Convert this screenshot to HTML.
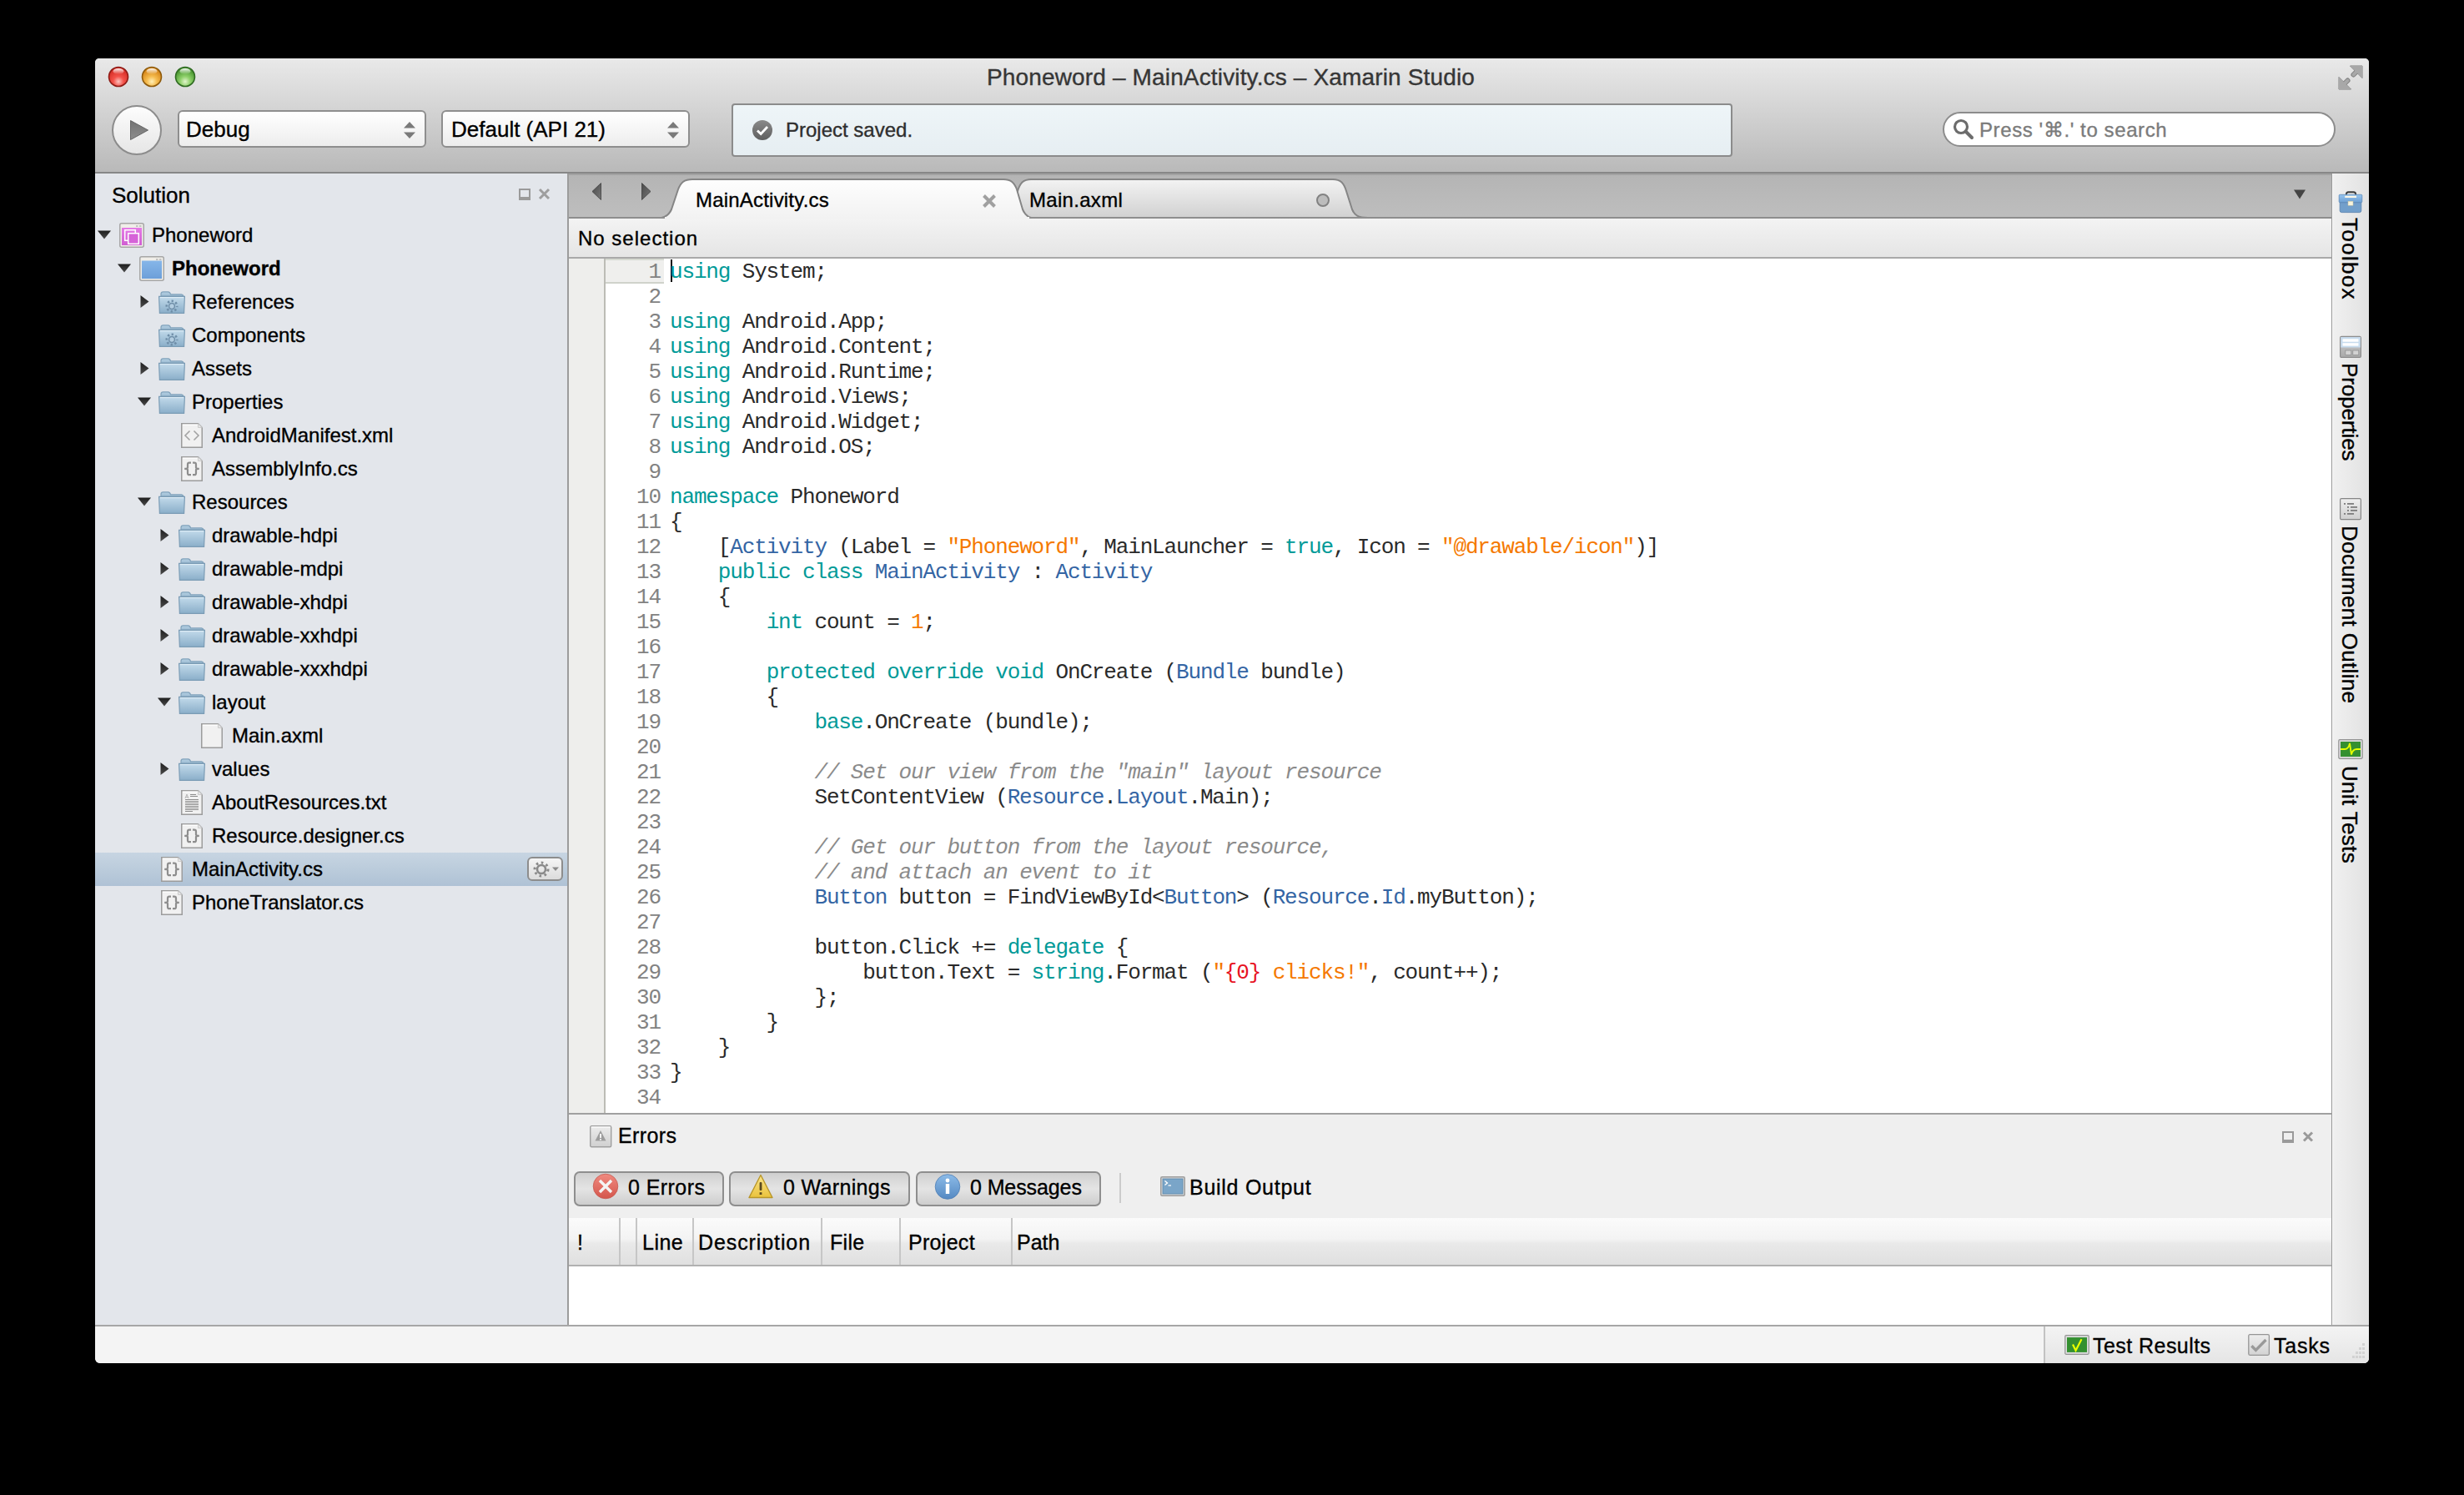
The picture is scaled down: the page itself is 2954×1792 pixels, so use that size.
<!DOCTYPE html>
<html><head><meta charset="utf-8">
<style>
html,body{margin:0;padding:0;background:#000;width:2954px;height:1792px;overflow:hidden}
*{box-sizing:border-box}
#win{position:absolute;left:114px;top:70px;width:2726px;height:1564px;border-radius:5px 5px 6px 6px;overflow:hidden;background:#e3e6eb}
#pg{position:absolute;left:-114px;top:-70px;width:2954px;height:1792px}
.a{position:absolute}
.t{position:absolute;font-family:"Liberation Sans",sans-serif;white-space:pre;color:#000;-webkit-text-stroke:0.35px currentColor}
.tr{font-size:24px;line-height:40px;height:40px}
.m{font-family:"Liberation Mono",monospace}
.cl{position:absolute;left:803px;height:30px;line-height:30px;padding-top:1px;font-family:"Liberation Mono",monospace;font-size:26px;letter-spacing:-1.15px;white-space:pre;color:#2a2a2a}
.ln{position:absolute;left:700px;width:92px;text-align:right;height:30px;line-height:30px;padding-top:1px;font-family:"Liberation Mono",monospace;font-size:26px;letter-spacing:-1.15px;white-space:pre;color:#828282}
.btn{position:absolute;top:1404px;height:42px;border-radius:7px;border:2px solid #8e8e8e;background:linear-gradient(#cfcfcf,#dcdcdc 30%,#e4e4e4 50%,#d9d9d9 75%,#cdcdcd)}
.bl{font-size:25px;line-height:40px;top:1403px}
.th{font-size:25px;line-height:40px;top:1469px}
.sep{top:1460px;width:2px;height:56px;background:#c6c6c6;border-right:0}
.vt{font-size:26px;line-height:40px;transform:rotate(90deg);transform-origin:0 0}
</style></head><body>
<svg width="0" height="0" style="position:absolute">
<defs>
<linearGradient id="gtri" x1="0" y1="0" x2="0" y2="1"><stop offset="0" stop-color="#1e1e1e"/><stop offset="1" stop-color="#4a4a4a"/></linearGradient>
<linearGradient id="gmag" x1="0" y1="0" x2="0" y2="1"><stop offset="0" stop-color="#e57be6"/><stop offset="1" stop-color="#d05ed2"/></linearGradient>
<linearGradient id="gblu" x1="0" y1="0" x2="0" y2="1"><stop offset="0" stop-color="#86b6e9"/><stop offset="1" stop-color="#6c9fd9"/></linearGradient>
<linearGradient id="gfold" x1="0" y1="0" x2="0" y2="1"><stop offset="0" stop-color="#c3dbeb"/><stop offset="1" stop-color="#8aaec9"/></linearGradient>
<linearGradient id="gtab" x1="0" y1="0" x2="0" y2="1"><stop offset="0" stop-color="#b4cfe2"/><stop offset="1" stop-color="#9dbcd3"/></linearGradient>
<symbol id="tri-e" viewBox="0 0 16 11"><path d="M0 0.5 H16 L8 10.5 Z" fill="url(#gtri)"/></symbol>
<symbol id="tri-c" viewBox="0 0 11 15"><path d="M0.5 0 L10.5 7.5 L0.5 15 Z" fill="url(#gtri)"/></symbol>
<symbol id="sol" viewBox="0 0 30 30">
 <rect x="0.75" y="0.75" width="28.5" height="28.5" rx="2" fill="#f0eee9" stroke="#a6a6a6" stroke-width="1.5"/>
 <rect x="20" y="3" width="2.5" height="2" fill="#c2c2c2"/><rect x="24" y="3" width="2.5" height="2" fill="#c2c2c2"/>
 <rect x="3" y="6" width="24" height="21" fill="url(#gmag)"/>
 <rect x="6.7" y="8.7" width="12.6" height="12.6" fill="none" stroke="#fff" stroke-width="1.5"/>
 <rect x="10.7" y="12.7" width="12.6" height="12.6" fill="#d663d8" stroke="#fff" stroke-width="1.5"/>
</symbol>
<symbol id="proj" viewBox="0 0 30 30">
 <rect x="0.75" y="0.75" width="28.5" height="28.5" rx="2" fill="#f0eee9" stroke="#a6a6a6" stroke-width="1.5"/>
 <rect x="20" y="3" width="2.5" height="2" fill="#c2c2c2"/><rect x="24" y="3" width="2.5" height="2" fill="#c2c2c2"/>
 <rect x="3" y="5.5" width="24" height="21.5" fill="url(#gblu)"/>
</symbol>
<symbol id="fold" viewBox="0 0 32 27">
 <path d="M3 6 V3.5 Q3 0.8 5.5 0.8 H11.5 Q14 0.8 14.5 3.8 H27.5 Q29.5 3.8 30 6 Z" fill="url(#gtab)" stroke="#82a3bc" stroke-width="1.2"/>
 <path d="M0.6 6.4 H31.4 L30.6 26.4 H1.4 Z" fill="url(#gfold)" stroke="#7b9cb5" stroke-width="1.2"/>
 <path d="M2 7.6 H30" stroke="#e2eff8" stroke-width="1"/>
</symbol>
<symbol id="foldg" viewBox="0 0 32 27">
 <use href="#fold"/>
 <circle cx="16" cy="18" r="3.4" fill="#b3cde0" stroke="#6f8ea8" stroke-width="1.5"/>
 <circle cx="16" cy="18" r="6.2" fill="none" stroke="#6f8ea8" stroke-width="2.6" stroke-dasharray="2.3 2.57" stroke-dashoffset="1.15"/>
</symbol>
<symbol id="page" viewBox="0 0 26 30">
 <path d="M0.75 0.75 H20.5 L25.25 5.5 V29.25 H0.75 Z" fill="#f1f1f1" stroke="#9c9c9c" stroke-width="1.5"/>
 <path d="M2 2.2 H20" stroke="#fff" stroke-width="1.2"/>
 <path d="M20.5 0.75 V5.5 H25.25 Z" fill="#e6e6e6" stroke="#c4c4c4" stroke-width="0.8"/>
</symbol>
<symbol id="fblank" viewBox="0 0 26 30"><use href="#page"/></symbol>
<symbol id="fcs" viewBox="0 0 26 30"><use href="#page"/>
 <path d="M12 7.7 H10 Q8 7.7 8 9.7 V13.6 Q8 14.9 4.2 14.9 Q8 14.9 8 16.2 V20.2 Q8 22.2 10 22.2 H12 M14 7.7 H16 Q18 7.7 18 9.7 V13.6 Q18 14.9 21.8 14.9 Q18 14.9 18 16.2 V20.2 Q18 22.2 16 22.2 H14" fill="none" stroke="#8e8e8e" stroke-width="2.2"/>
</symbol>
<symbol id="fxml" viewBox="0 0 26 30"><use href="#page"/>
 <path d="M10.5 9.5 L5 15 L10.5 20.5 M15.5 9.5 L21 15 L15.5 20.5" fill="none" stroke="#a3a3a3" stroke-width="1.6"/>
</symbol>
<symbol id="ftxt" viewBox="0 0 26 30"><use href="#page"/>
 <path d="M5 10 L7 5 L9 10 M5.8 8.5 H8.2" fill="none" stroke="#b5b5b5" stroke-width="1"/>
 <path d="M11 5.5 H18 M11 7.5 H20 M5 11.5 H21 M5 13.5 H21 M5 15.5 H21 M5 17.5 H21 M5 19.5 H21 M5 21.5 H21 M5 23.5 H21 M5 25.5 H14" stroke="#8c8c8c" stroke-width="1"/>
</symbol>
</defs></svg>

<div id="win"><div id="pg">

<!-- toolbar -->
<div class="a" style="left:114px;top:70px;width:2726px;height:136px;background:linear-gradient(#e9e9e9,#d6d6d6 40%,#b9b9b9)"></div>
<div class="a" style="left:114px;top:206px;width:2726px;height:2px;background:#878787"></div>

<!-- traffic lights -->
<svg class="a" style="left:128px;top:78px" width="108" height="28" viewBox="0 0 108 28">
<defs>
<radialGradient id="rl" cx="0.5" cy="0.75" r="0.6"><stop offset="0" stop-color="#fbc3bf"/><stop offset="0.45" stop-color="#f3524a"/><stop offset="1" stop-color="#d9322a"/></radialGradient>
<radialGradient id="yl" cx="0.5" cy="0.75" r="0.6"><stop offset="0" stop-color="#fff0b8"/><stop offset="0.45" stop-color="#f5bb4e"/><stop offset="1" stop-color="#d98a1d"/></radialGradient>
<radialGradient id="gl" cx="0.5" cy="0.75" r="0.6"><stop offset="0" stop-color="#e2f5cc"/><stop offset="0.45" stop-color="#8ed06a"/><stop offset="1" stop-color="#4f9c35"/></radialGradient>
<linearGradient id="hl" x1="0" y1="0" x2="0" y2="1"><stop offset="0" stop-color="#fff" stop-opacity="0.95"/><stop offset="1" stop-color="#fff" stop-opacity="0"/></linearGradient>
</defs>
<circle cx="14" cy="14" r="11.5" fill="url(#rl)" stroke="#8e1c16" stroke-width="1.6"/>
<ellipse cx="14" cy="7.5" rx="6.5" ry="3.5" fill="url(#hl)"/>
<circle cx="54" cy="14" r="11.5" fill="url(#yl)" stroke="#8d5a0c" stroke-width="1.6"/>
<ellipse cx="54" cy="7.5" rx="6.5" ry="3.5" fill="url(#hl)"/>
<circle cx="94" cy="14" r="11.5" fill="url(#gl)" stroke="#2f6a22" stroke-width="1.6"/>
<ellipse cx="94" cy="7.5" rx="6.5" ry="3.5" fill="url(#hl)"/>
</svg>
<!-- title -->
<div class="t" style="left:1183px;top:73px;font-size:28px;line-height:40px;color:#363636;letter-spacing:0.15px">Phoneword – MainActivity.cs – Xamarin Studio</div>
<!-- fullscreen -->
<svg class="a" style="left:2802px;top:77px" width="33" height="32" viewBox="0 0 33 32">
<g stroke="#7f7f7f" stroke-width="1" fill="#a8a8a8" stroke-linejoin="round"><path d="M15.5 2 H30 V16.5 Z"/><path d="M2 15.5 V30 H16.5 Z"/></g>
<g stroke-linecap="round"><path d="M24.5 7.5 L19.5 12.5 M7.5 24.5 L12.5 19.5" stroke="#7f7f7f" stroke-width="6"/><path d="M24.5 7.5 L19.5 12.5 M7.5 24.5 L12.5 19.5" stroke="#a8a8a8" stroke-width="4"/></g>
<path d="M15.5 2 H30 V16.5 Z M2 15.5 V30 H16.5 Z" fill="#a8a8a8"/>
</svg>
<!-- play -->
<div class="a" style="left:134px;top:126px;width:60px;height:60px;border-radius:50%;border:2px solid #8c8c8c;background:linear-gradient(#fdfdfd,#e6e6e6)"></div>
<svg class="a" style="left:155px;top:143px" width="24" height="26"><defs><linearGradient id="gpl" x1="0" y1="0" x2="0" y2="1"><stop offset="0" stop-color="#727272"/><stop offset="1" stop-color="#8e8e8e"/></linearGradient></defs><path d="M1.5 1.5 L22.5 13 L1.5 24.5 Z" fill="url(#gpl)" stroke="#5e5e5e" stroke-width="0.9" stroke-linejoin="round"/></svg>
<!-- combos -->
<div class="a" style="left:213px;top:132px;width:298px;height:45px;border-radius:6px;border:2px solid #8e8e8e;background:linear-gradient(#ffffff,#ededed)"></div>
<div class="t" style="left:223px;top:135px;font-size:26px;line-height:40px">Debug</div>
<svg class="a" style="left:483px;top:145px" width="16" height="22"><path d="M8 1 L15 8.5 H1 Z M8 21 L15 13.5 H1 Z" fill="#7a7a7a"/></svg>
<div class="a" style="left:529px;top:132px;width:298px;height:45px;border-radius:6px;border:2px solid #8e8e8e;background:linear-gradient(#ffffff,#ededed)"></div>
<div class="t" style="left:541px;top:135px;font-size:26px;line-height:40px">Default (API 21)</div>
<svg class="a" style="left:799px;top:145px" width="16" height="22"><path d="M8 1 L15 8.5 H1 Z M8 21 L15 13.5 H1 Z" fill="#7a7a7a"/></svg>
<!-- status -->
<div class="a" style="left:877px;top:124px;width:1200px;height:64px;border-radius:4px;border:2px solid #8b8b8b;background:linear-gradient(#eef5f8,#e6eef2)"></div>
<svg class="a" style="left:901px;top:143px" width="26" height="26"><defs><linearGradient id="gck" x1="0" y1="0" x2="0" y2="1"><stop offset="0" stop-color="#8a8a8a"/><stop offset="1" stop-color="#5e5e5e"/></linearGradient></defs><circle cx="13" cy="13" r="12" fill="url(#gck)"/><path d="M7 13.5 L11.2 17.5 L19 9" fill="none" stroke="#fff" stroke-width="2.8"/></svg>
<div class="t" style="left:942px;top:136px;font-size:24px;line-height:40px;color:#2e2e2e">Project saved.</div>
<!-- search -->
<div class="a" style="left:2329px;top:134px;width:471px;height:42px;border-radius:21px;border:2px solid #8c8c8c;background:#fff"></div>
<svg class="a" style="left:2340px;top:141px" width="28" height="28"><circle cx="11" cy="11" r="7.5" fill="none" stroke="#6c6c6c" stroke-width="3.2"/><path d="M16.5 16.5 L24 24" stroke="#6c6c6c" stroke-width="4" stroke-linecap="round"/></svg>
<div class="t" style="left:2373px;top:136px;font-size:24px;line-height:40px;color:#7b7b7b;letter-spacing:0.6px">Press '⌘.' to search</div>

<!-- solution pad -->
<div class="a" style="left:114px;top:208px;width:566px;height:1380px;background:#e3e6eb"></div>
<div class="a" style="left:680px;top:208px;width:2px;height:1380px;background:#9c9c9c"></div>

<!-- pad header -->
<div class="t" style="left:134px;top:214px;font-size:26px;line-height:40px">Solution</div>
<div class="a" style="left:114px;top:1022px;width:566px;height:40px;background:linear-gradient(#c7d5e2,#afc2d5)"></div>
<svg class="a" style="left:117px;top:276px" width="16" height="11"><use href="#tri-e"/></svg>
<svg class="a" style="left:143px;top:267px" width="30" height="30"><use href="#sol"/></svg>
<div class="t tr" style="left:182px;top:262px;">Phoneword</div>
<svg class="a" style="left:141px;top:316px" width="16" height="11"><use href="#tri-e"/></svg>
<svg class="a" style="left:167px;top:307px" width="30" height="30"><use href="#proj"/></svg>
<div class="t tr" style="left:206px;top:302px;font-weight:bold;">Phoneword</div>
<svg class="a" style="left:168px;top:354px" width="11" height="15"><use href="#tri-c"/></svg>
<svg class="a" style="left:190px;top:349px" width="32" height="27"><use href="#foldg"/></svg>
<div class="t tr" style="left:230px;top:342px;">References</div>
<svg class="a" style="left:190px;top:389px" width="32" height="27"><use href="#foldg"/></svg>
<div class="t tr" style="left:230px;top:382px;">Components</div>
<svg class="a" style="left:168px;top:434px" width="11" height="15"><use href="#tri-c"/></svg>
<svg class="a" style="left:190px;top:429px" width="32" height="27"><use href="#fold"/></svg>
<div class="t tr" style="left:230px;top:422px;">Assets</div>
<svg class="a" style="left:165px;top:476px" width="16" height="11"><use href="#tri-e"/></svg>
<svg class="a" style="left:190px;top:469px" width="32" height="27"><use href="#fold"/></svg>
<div class="t tr" style="left:230px;top:462px;">Properties</div>
<svg class="a" style="left:217px;top:507px" width="26" height="30"><use href="#fxml"/></svg>
<div class="t tr" style="left:254px;top:502px;">AndroidManifest.xml</div>
<svg class="a" style="left:217px;top:547px" width="26" height="30"><use href="#fcs"/></svg>
<div class="t tr" style="left:254px;top:542px;">AssemblyInfo.cs</div>
<svg class="a" style="left:165px;top:596px" width="16" height="11"><use href="#tri-e"/></svg>
<svg class="a" style="left:190px;top:589px" width="32" height="27"><use href="#fold"/></svg>
<div class="t tr" style="left:230px;top:582px;">Resources</div>
<svg class="a" style="left:192px;top:634px" width="11" height="15"><use href="#tri-c"/></svg>
<svg class="a" style="left:214px;top:629px" width="32" height="27"><use href="#fold"/></svg>
<div class="t tr" style="left:254px;top:622px;">drawable-hdpi</div>
<svg class="a" style="left:192px;top:674px" width="11" height="15"><use href="#tri-c"/></svg>
<svg class="a" style="left:214px;top:669px" width="32" height="27"><use href="#fold"/></svg>
<div class="t tr" style="left:254px;top:662px;">drawable-mdpi</div>
<svg class="a" style="left:192px;top:714px" width="11" height="15"><use href="#tri-c"/></svg>
<svg class="a" style="left:214px;top:709px" width="32" height="27"><use href="#fold"/></svg>
<div class="t tr" style="left:254px;top:702px;">drawable-xhdpi</div>
<svg class="a" style="left:192px;top:754px" width="11" height="15"><use href="#tri-c"/></svg>
<svg class="a" style="left:214px;top:749px" width="32" height="27"><use href="#fold"/></svg>
<div class="t tr" style="left:254px;top:742px;">drawable-xxhdpi</div>
<svg class="a" style="left:192px;top:794px" width="11" height="15"><use href="#tri-c"/></svg>
<svg class="a" style="left:214px;top:789px" width="32" height="27"><use href="#fold"/></svg>
<div class="t tr" style="left:254px;top:782px;">drawable-xxxhdpi</div>
<svg class="a" style="left:189px;top:836px" width="16" height="11"><use href="#tri-e"/></svg>
<svg class="a" style="left:214px;top:829px" width="32" height="27"><use href="#fold"/></svg>
<div class="t tr" style="left:254px;top:822px;">layout</div>
<svg class="a" style="left:241px;top:867px" width="26" height="30"><use href="#fblank"/></svg>
<div class="t tr" style="left:278px;top:862px;">Main.axml</div>
<svg class="a" style="left:192px;top:914px" width="11" height="15"><use href="#tri-c"/></svg>
<svg class="a" style="left:214px;top:909px" width="32" height="27"><use href="#fold"/></svg>
<div class="t tr" style="left:254px;top:902px;">values</div>
<svg class="a" style="left:217px;top:947px" width="26" height="30"><use href="#ftxt"/></svg>
<div class="t tr" style="left:254px;top:942px;">AboutResources.txt</div>
<svg class="a" style="left:217px;top:987px" width="26" height="30"><use href="#fcs"/></svg>
<div class="t tr" style="left:254px;top:982px;">Resource.designer.cs</div>
<svg class="a" style="left:193px;top:1027px" width="26" height="30"><use href="#fcs"/></svg>
<div class="t tr" style="left:230px;top:1022px;">MainActivity.cs</div>
<svg class="a" style="left:193px;top:1067px" width="26" height="30"><use href="#fcs"/></svg>
<div class="t tr" style="left:230px;top:1062px;">PhoneTranslator.cs</div>

<!-- editor tab bar -->
<div class="a" style="left:682px;top:208px;width:2113px;height:52px;background:linear-gradient(#b4b4b4,#bebebe)"></div>
<div class="a" style="left:682px;top:208px;width:2113px;height:2px;background:#a2a2a2"></div>
<div class="a" style="left:682px;top:260px;width:2113px;height:2px;background:#909090"></div>
<!-- no selection bar -->
<div class="a" style="left:682px;top:262px;width:2113px;height:46px;background:linear-gradient(#f3f3f3,#e5e5e5)"></div>
<div class="a" style="left:682px;top:308px;width:2113px;height:2px;background:#a9a9a9"></div>
<!-- tabs -->
<svg class="a" style="left:682px;top:208px" width="2113" height="54" viewBox="682 208 2113 54">
<defs>
<linearGradient id="gact" x1="0" y1="0" x2="0" y2="1"><stop offset="0" stop-color="#fefefe"/><stop offset="1" stop-color="#f2f2f2"/></linearGradient>
<linearGradient id="ginact" x1="0" y1="0" x2="0" y2="1"><stop offset="0" stop-color="#f3f3f3"/><stop offset="1" stop-color="#d0d0d0"/></linearGradient>
<linearGradient id="garr" x1="0" y1="0" x2="1" y2="1"><stop offset="0" stop-color="#4a4a4a"/><stop offset="1" stop-color="#777"/></linearGradient>
</defs>
<path d="M710 229.5 L720.5 219.5 V239.5 Z" fill="url(#garr)" stroke="#3e3e3e" stroke-width="0.8"/>
<path d="M780 229.5 L769.5 219.5 V239.5 Z" fill="url(#garr)" stroke="#3e3e3e" stroke-width="0.8"/>
<path d="M1196 262 C1206 262 1210 258 1213 251 L1220 229 C1223 219 1227 215 1236 215 H1598 C1607 215 1611 219 1614 229 L1621 251 C1624 258 1628 261 1640 261 Z" fill="url(#ginact)" stroke="#858585" stroke-width="2"/>
<path d="M786 262 C797 262 802 258 805 251 L813 227 C816 219 820 215 830 215 H1203 C1212 215 1216 219 1219 227 L1226 251 C1229 258 1233 262 1244 262" fill="url(#gact)" stroke="#858585" stroke-width="2"/>
<rect x="682" y="260" width="2113" height="2" fill="#8e8e8e"/>
<path d="M797 260 H1234 V262 H797 Z" fill="#f2f2f2"/>
<path d="M1179.5 234.5 L1192.5 247.5 M1192.5 234.5 L1179.5 247.5" stroke="#a0a0a0" stroke-width="4"/>
<circle cx="1586" cy="240" r="7" fill="#bcbcbc" stroke="#828282" stroke-width="2"/>
<path d="M2750 227.5 H2764 L2757 238.5 Z" fill="#444"/>
</svg>
<div class="t" style="left:834px;top:220px;font-size:24px;line-height:40px;letter-spacing:0.2px">MainActivity.cs</div>
<div class="t" style="left:1234px;top:220px;font-size:24px;line-height:40px;letter-spacing:0.3px">Main.axml</div>
<div class="t" style="left:693px;top:266px;font-size:24px;line-height:40px;letter-spacing:1px">No selection</div>

<!-- code area -->
<div class="a" style="left:682px;top:310px;width:2113px;height:1024px;background:#fff"></div>
<div class="a" style="left:682px;top:310px;width:42px;height:1024px;background:#eeeeec"></div>
<div class="a" style="left:724px;top:310px;width:2px;height:1024px;background:#bcbcb6"></div>
<div class="a" style="left:682px;top:1334px;width:2113px;height:2px;background:#a0a0a0"></div>

<!-- current line -->
<div class="a" style="left:726px;top:310px;width:70px;height:30px;background:#efefed;border-top:2px solid #d6d9d1;border-bottom:2px solid #d0d3cb"></div>
<div class="a" style="left:804px;top:311px;width:2px;height:27px;background:#111"></div>
<!-- code -->
<div class="cl" style="top:310px"><span style="color:#009a98">using</span> System;</div>
<div class="ln" style="top:310px">1</div>
<div class="cl" style="top:340px"></div>
<div class="ln" style="top:340px">2</div>
<div class="cl" style="top:370px"><span style="color:#009a98">using</span> Android.App;</div>
<div class="ln" style="top:370px">3</div>
<div class="cl" style="top:400px"><span style="color:#009a98">using</span> Android.Content;</div>
<div class="ln" style="top:400px">4</div>
<div class="cl" style="top:430px"><span style="color:#009a98">using</span> Android.Runtime;</div>
<div class="ln" style="top:430px">5</div>
<div class="cl" style="top:460px"><span style="color:#009a98">using</span> Android.Views;</div>
<div class="ln" style="top:460px">6</div>
<div class="cl" style="top:490px"><span style="color:#009a98">using</span> Android.Widget;</div>
<div class="ln" style="top:490px">7</div>
<div class="cl" style="top:520px"><span style="color:#009a98">using</span> Android.OS;</div>
<div class="ln" style="top:520px">8</div>
<div class="cl" style="top:550px"></div>
<div class="ln" style="top:550px">9</div>
<div class="cl" style="top:580px"><span style="color:#009a98">namespace</span> Phoneword</div>
<div class="ln" style="top:580px">10</div>
<div class="cl" style="top:610px">{</div>
<div class="ln" style="top:610px">11</div>
<div class="cl" style="top:640px">    [<span style="color:#3465a4">Activity</span> (Label = <span style="color:#f57900">"Phoneword"</span>, MainLauncher = <span style="color:#009a98">true</span>, Icon = <span style="color:#f57900">"@drawable/icon"</span>)]</div>
<div class="ln" style="top:640px">12</div>
<div class="cl" style="top:670px">    <span style="color:#009a98">public</span> <span style="color:#009a98">class</span> <span style="color:#3465a4">MainActivity</span> : <span style="color:#3465a4">Activity</span></div>
<div class="ln" style="top:670px">13</div>
<div class="cl" style="top:700px">    {</div>
<div class="ln" style="top:700px">14</div>
<div class="cl" style="top:730px">        <span style="color:#009a98">int</span> count = <span style="color:#f57900">1</span>;</div>
<div class="ln" style="top:730px">15</div>
<div class="cl" style="top:760px"></div>
<div class="ln" style="top:760px">16</div>
<div class="cl" style="top:790px">        <span style="color:#009a98">protected</span> <span style="color:#009a98">override</span> <span style="color:#009a98">void</span> OnCreate (<span style="color:#3465a4">Bundle</span> bundle)</div>
<div class="ln" style="top:790px">17</div>
<div class="cl" style="top:820px">        {</div>
<div class="ln" style="top:820px">18</div>
<div class="cl" style="top:850px">            <span style="color:#009a98">base</span>.OnCreate (bundle);</div>
<div class="ln" style="top:850px">19</div>
<div class="cl" style="top:880px"></div>
<div class="ln" style="top:880px">20</div>
<div class="cl" style="top:910px">            <span style="color:#8b8b8b;font-style:italic">// Set our view from the "main" layout resource</span></div>
<div class="ln" style="top:910px">21</div>
<div class="cl" style="top:940px">            SetContentView (<span style="color:#3465a4">Resource</span>.<span style="color:#3465a4">Layout</span>.Main);</div>
<div class="ln" style="top:940px">22</div>
<div class="cl" style="top:970px"></div>
<div class="ln" style="top:970px">23</div>
<div class="cl" style="top:1000px">            <span style="color:#8b8b8b;font-style:italic">// Get our button from the layout resource,</span></div>
<div class="ln" style="top:1000px">24</div>
<div class="cl" style="top:1030px">            <span style="color:#8b8b8b;font-style:italic">// and attach an event to it</span></div>
<div class="ln" style="top:1030px">25</div>
<div class="cl" style="top:1060px">            <span style="color:#3465a4">Button</span> button = FindViewById&lt;<span style="color:#3465a4">Button</span>&gt; (<span style="color:#3465a4">Resource</span>.<span style="color:#3465a4">Id</span>.myButton);</div>
<div class="ln" style="top:1060px">26</div>
<div class="cl" style="top:1090px"></div>
<div class="ln" style="top:1090px">27</div>
<div class="cl" style="top:1120px">            button.Click += <span style="color:#009a98">delegate</span> {</div>
<div class="ln" style="top:1120px">28</div>
<div class="cl" style="top:1150px">                button.Text = <span style="color:#009a98">string</span>.Format (<span style="color:#f57900">"</span><span style="color:#e7121f">{0}</span><span style="color:#f57900"> clicks!"</span>, count++);</div>
<div class="ln" style="top:1150px">29</div>
<div class="cl" style="top:1180px">            };</div>
<div class="ln" style="top:1180px">30</div>
<div class="cl" style="top:1210px">        }</div>
<div class="ln" style="top:1210px">31</div>
<div class="cl" style="top:1240px">    }</div>
<div class="ln" style="top:1240px">32</div>
<div class="cl" style="top:1270px">}</div>
<div class="ln" style="top:1270px">33</div>
<div class="cl" style="top:1300px"></div>
<div class="ln" style="top:1300px">34</div>

<!-- errors pad -->
<div class="a" style="left:682px;top:1336px;width:2113px;height:252px;background:#efefef"></div>

<!-- right border + dock -->
<div class="a" style="left:2795px;top:208px;width:1px;height:1380px;background:#999"></div><div class="a" style="left:2796px;top:208px;width:1px;height:1380px;background:#f6f6f6"></div>
<div class="a" style="left:2797px;top:208px;width:43px;height:1380px;background:linear-gradient(90deg,#f0f0f0,#e2e2e2)"></div>

<!-- status bar -->
<div class="a" style="left:114px;top:1588px;width:2726px;height:2px;background:#a6a6a6"></div>
<div class="a" style="left:114px;top:1590px;width:2726px;height:44px;background:#f4f4f4"></div>

<!-- errors pad content -->
<svg class="a" style="left:707px;top:1349px" width="27" height="27"><defs><linearGradient id="geh" x1="0" y1="0" x2="0" y2="1"><stop offset="0" stop-color="#ececec"/><stop offset="1" stop-color="#d0d0d0"/></linearGradient></defs><rect x="0.7" y="0.7" width="25" height="25" rx="1.5" fill="url(#geh)" stroke="#9f9f9f" stroke-width="1.4"/><path d="M1.8 2 H24.8" stroke="#fff" stroke-width="1.2"/><path d="M13 6 L19.5 18.5 H6.5 Z" fill="#9d9d9d"/><rect x="12" y="10" width="2" height="5" fill="#f2f2f2"/><rect x="12" y="16" width="2" height="1.6" fill="#f2f2f2"/></svg>
<div class="t" style="left:741px;top:1341px;font-size:25px;line-height:40px;letter-spacing:0.4px">Errors</div>
<svg class="a" style="left:2734px;top:1354px" width="44" height="18"><rect x="3" y="3" width="12" height="12" fill="none" stroke="#9a9a9a" stroke-width="2"/><rect x="3" y="12" width="12" height="3" fill="#9a9a9a"/><path d="M28 3.5 L38 13.5 M38 3.5 L28 13.5" stroke="#9a9a9a" stroke-width="3"/></svg>

<div class="btn" style="left:688px;width:180px"></div>
<svg class="a" style="left:710px;top:1406px" width="32" height="32"><defs><linearGradient id="gerr" x1="0" y1="0" x2="0" y2="1"><stop offset="0" stop-color="#f08a80"/><stop offset="1" stop-color="#d4564c"/></linearGradient></defs><circle cx="16" cy="16" r="14.8" fill="url(#gerr)" stroke="#c75a52" stroke-width="0.8"/><path d="M9 9 L23 23 M23 9 L9 23" stroke="#f4f4f4" stroke-width="3.4"/></svg>
<div class="t bl" style="left:753px;letter-spacing:0.43px">0 Errors</div>

<div class="btn" style="left:874px;width:217px"></div>
<svg class="a" style="left:896px;top:1406px" width="32" height="32"><defs><linearGradient id="gwarn" x1="0" y1="0" x2="0" y2="1"><stop offset="0" stop-color="#fbe58a"/><stop offset="1" stop-color="#eac23c"/></linearGradient></defs><path d="M16 2.5 L30 29.5 H2 Z" fill="url(#gwarn)" stroke="#b8962a" stroke-width="1.4" stroke-linejoin="round"/><rect x="14.6" y="11" width="2.8" height="10" rx="1" fill="#5a4a20"/><rect x="14.6" y="23.2" width="2.8" height="2.8" fill="#5a4a20"/></svg>
<div class="t bl" style="left:939px;letter-spacing:0.33px">0 Warnings</div>

<div class="btn" style="left:1098px;width:222px"></div>
<svg class="a" style="left:1120px;top:1407px" width="32" height="32"><defs><linearGradient id="ginfo" x1="0" y1="0" x2="0" y2="1"><stop offset="0" stop-color="#8cbbe8"/><stop offset="1" stop-color="#5589c2"/></linearGradient></defs><circle cx="16" cy="15.5" r="14.8" fill="url(#ginfo)" stroke="#4f7fb5" stroke-width="0.8"/><rect x="13.8" y="12" width="4.4" height="12" fill="#fff"/><circle cx="16" cy="8" r="2.4" fill="#fff"/></svg>
<div class="t bl" style="left:1163px;letter-spacing:-0.1px">0 Messages</div>

<div class="a" style="left:1342px;top:1406px;width:2px;height:36px;background:#cbcbcb"></div>
<svg class="a" style="left:1391px;top:1410px" width="30" height="24"><rect x="0.75" y="0.75" width="28.5" height="22.5" rx="1.5" fill="#d8d8d8" stroke="#9d9d9d" stroke-width="1.5"/><rect x="3" y="3" width="24" height="18" fill="#7aa5c8" stroke="#5a88ad" stroke-width="0.8"/><path d="M5.5 5.5 L8.5 8 L5.5 10.5" fill="none" stroke="#fff" stroke-width="1.4"/><path d="M9.5 11 H13" stroke="#fff" stroke-width="1.2"/></svg>
<div class="t bl" style="left:1426px;letter-spacing:0.73px">Build Output</div>

<!-- table header -->
<div class="a" style="left:682px;top:1460px;width:2113px;height:56px;background:linear-gradient(#fbfbfb,#f3f3f3 45%,#e9e9e9 55%,#e0e0e0)"></div>
<div class="a" style="left:682px;top:1516px;width:2113px;height:2px;background:#b1b1b1"></div>
<div class="a" style="left:682px;top:1518px;width:2113px;height:70px;background:#fff"></div>
<div class="a sep" style="left:742px"></div>
<div class="a sep" style="left:762px"></div>
<div class="a sep" style="left:830px"></div>
<div class="a sep" style="left:984px"></div>
<div class="a sep" style="left:1078px"></div>
<div class="a sep" style="left:1212px"></div>
<div class="t th" style="left:692px">!</div>
<div class="t th" style="left:770px;letter-spacing:0.5px">Line</div>
<div class="t th" style="left:837px;letter-spacing:0.9px">Description</div>
<div class="t th" style="left:995px;letter-spacing:0.3px">File</div>
<div class="t th" style="left:1089px;letter-spacing:0.3px">Project</div>
<div class="t th" style="left:1219px">Path</div>

<!-- right dock content -->
<svg class="a" style="left:2803px;top:229px" width="30" height="27"><defs><linearGradient id="gtb" x1="0" y1="0" x2="0" y2="1"><stop offset="0" stop-color="#96c5f0"/><stop offset="1" stop-color="#6d9fd2"/></linearGradient></defs><path d="M9.8 7 V4 Q9.8 1.3 12.5 1.3 H18.5 Q21.2 1.3 21.2 4 V7" fill="none" stroke="#3c3c3c" stroke-width="1.9"/><path d="M2.2 13.6 H27.8 V23.5 Q27.8 25.6 25.7 25.6 H4.3 Q2.2 25.6 2.2 23.5 Z" fill="#729fcb" stroke="#5b85b0" stroke-width="0.9"/><rect x="1.2" y="4.3" width="27.6" height="9.4" rx="1" fill="url(#gtb)" stroke="#5d89b6" stroke-width="0.8"/><rect x="8.2" y="5.8" width="13.8" height="2.2" fill="#fbf7e8"/><rect x="12" y="12.2" width="6" height="5" fill="#f8f4dc" stroke="#c7c09e" stroke-width="0.5"/></svg>
<div class="t vt" style="left:2837px;top:261px;letter-spacing:1.33px">Toolbox</div>
<svg class="a" style="left:2804px;top:402px" width="28" height="28"><defs><linearGradient id="gpr" x1="0" y1="0" x2="0" y2="1"><stop offset="0" stop-color="#cdcdcd"/><stop offset="1" stop-color="#a9a9a9"/></linearGradient></defs><rect x="1.6" y="1.4" width="24.8" height="25" rx="1.5" fill="url(#gpr)" stroke="#8d8d8d" stroke-width="1.2"/><rect x="2.2" y="2" width="23.6" height="12.5" fill="#c8dcee"/><rect x="4.5" y="4.3" width="19" height="3.4" fill="#fff"/><rect x="4.5" y="9.2" width="19" height="3.4" fill="#fff"/><rect x="7.8" y="18" width="7" height="5.5" fill="#d2d2d2" stroke="#8a8a8a" stroke-width="0.7"/><rect x="16.8" y="18" width="7" height="5.5" fill="#d2d2d2" stroke="#8a8a8a" stroke-width="0.7"/></svg>
<div class="t vt" style="left:2837px;top:435px;letter-spacing:-0.1px">Properties</div>
<svg class="a" style="left:2804px;top:597px" width="28" height="27"><defs><linearGradient id="gdo" x1="0" y1="0" x2="0" y2="1"><stop offset="0" stop-color="#efefef"/><stop offset="1" stop-color="#cfcfcf"/></linearGradient></defs><rect x="1.6" y="0.7" width="24.8" height="25" rx="1.5" fill="url(#gdo)" stroke="#858585" stroke-width="1.2"/><g fill="#7e7e7e"><rect x="6" y="6" width="2" height="1.8"/><rect x="10" y="6" width="8" height="1.8"/><rect x="10" y="10" width="2" height="1.8"/><rect x="14" y="10" width="8" height="1.8"/><rect x="10" y="14" width="2" height="1.8"/><rect x="14" y="14" width="8" height="1.8"/><rect x="6" y="18" width="2" height="1.8"/><rect x="10" y="18" width="8" height="1.8"/></g></svg>
<div class="t vt" style="left:2837px;top:630px;letter-spacing:0.33px">Document Outline</div>
<svg class="a" style="left:2803px;top:886px" width="30" height="24"><rect x="0.8" y="0.7" width="28.4" height="22.6" rx="1.2" fill="#dcdcdc" stroke="#939393" stroke-width="1.2"/><rect x="3" y="3" width="24" height="18" fill="#349030"/><path d="M3 12 H8 Q12.5 12 14 5 L16 18.5 Q17.5 12 22.5 12 H27" fill="none" stroke="#e4ff00" stroke-width="1.8"/></svg>
<div class="t vt" style="left:2837px;top:918px;letter-spacing:0.33px">Unit Tests</div>

<!-- status bar content -->
<div class="a" style="left:2450px;top:1590px;width:2px;height:44px;background:#c2c2c2"></div>
<div class="a" style="left:2452px;top:1590px;width:388px;height:44px;background:linear-gradient(#f3f3f3,#e5e5e5)"></div>
<svg class="a" style="left:2475px;top:1600px" width="30" height="25"><rect x="0.8" y="0.7" width="28.4" height="22.6" rx="1.2" fill="#dedede" stroke="#949494" stroke-width="1.2"/><rect x="3" y="3.1" width="24" height="17.8" fill="#349030"/><path d="M10 11.4 L13.5 18.7 L20.5 5.3" fill="none" stroke="#e8ff00" stroke-width="2.2"/></svg>
<div class="t bl" style="left:2509px;top:1593px;letter-spacing:0.45px">Test Results</div>
<svg class="a" style="left:2695px;top:1599px" width="27" height="27"><defs><linearGradient id="gtk" x1="0" y1="0" x2="0" y2="1"><stop offset="0" stop-color="#ededed"/><stop offset="1" stop-color="#d3d3d3"/></linearGradient></defs><rect x="0.8" y="0.7" width="24.6" height="24.6" rx="1.5" fill="url(#gtk)" stroke="#959595" stroke-width="1.3"/><path d="M4.4 14.3 L9.4 19.4 L21.5 7" fill="none" stroke="#999" stroke-width="3.4"/></svg>
<div class="t bl" style="left:2726px;top:1593px;letter-spacing:0.75px">Tasks</div>
<svg class="a" style="left:2816px;top:1608px" width="22" height="24"><g fill="#d2d2d2"><rect x="16" y="2" width="3" height="3"/><rect x="12" y="7" width="3" height="3"/><rect x="16" y="7" width="3" height="3"/><rect x="8" y="12" width="3" height="3"/><rect x="12" y="12" width="3" height="3"/><rect x="16" y="12" width="3" height="3"/><rect x="4" y="17" width="3" height="3"/><rect x="8" y="17" width="3" height="3"/><rect x="12" y="17" width="3" height="3"/><rect x="16" y="17" width="3" height="3"/></g></svg>

<!-- solution pad buttons -->
<svg class="a" style="left:620px;top:224px" width="44" height="18"><rect x="3" y="3" width="12" height="12" fill="none" stroke="#9a9a9a" stroke-width="2"/><rect x="3" y="12" width="12" height="3" fill="#9a9a9a"/><path d="M27 3 L38 14 M38 3 L27 14" stroke="#9e9e9e" stroke-width="3"/></svg>
<!-- gear button -->
<div class="a" style="left:632px;top:1027px;width:43px;height:29px;border-radius:6px;border:2px solid #8d8d8d;background:linear-gradient(#f5f5f5,#dcdcdc)"></div>
<svg class="a" style="left:637px;top:1030px" width="36" height="24"><g fill="none" stroke="#8a8a8a"><circle cx="12" cy="12" r="5" stroke-width="2.6"/><circle cx="12" cy="12" r="8" stroke-width="3" stroke-dasharray="2.6 3.6"/></g><path d="M25 9.5 H33 L29 14 Z" fill="#8a8a8a"/></svg>

</div></div>
</body></html>
